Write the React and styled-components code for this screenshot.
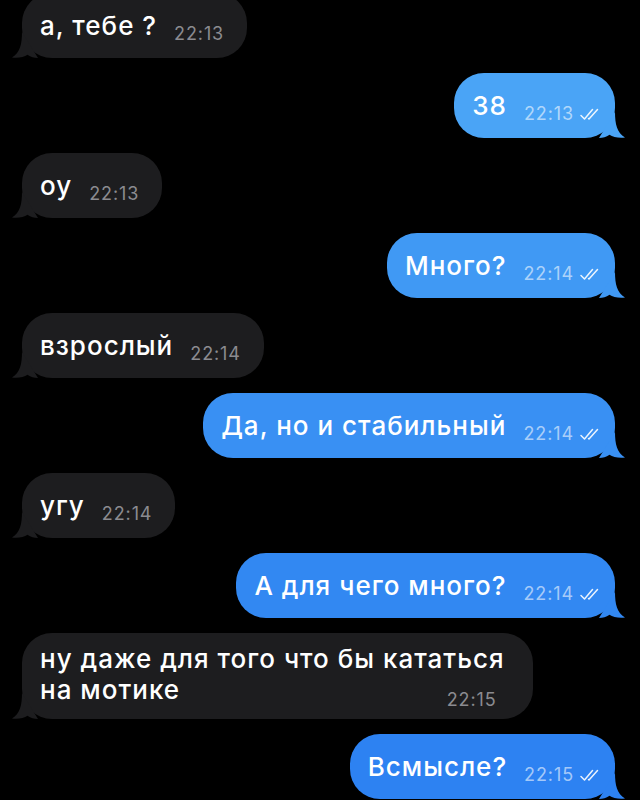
import React from "react";
import styled, { createGlobalStyle } from "styled-components";

const Global = createGlobalStyle`
  html, body {
    margin: 0;
    padding: 0;
    background: #000000;
  }
  body {
    font-family: Inter, "Noto Sans", Roboto, sans-serif;
    -webkit-font-smoothing: antialiased;
  }
`;

const Screen = styled.div`
  width: 640px;
  height: 800px;
  overflow: hidden;
  background: #000000;
`;

const Feed = styled.div`
  display: flex;
  flex-direction: column;
  gap: 15px;
  margin-top: -7px;
  padding: 0 25px 0 22px;
`;

const Row = styled.div`
  display: flex;
  justify-content: ${(p) => (p.$out ? "flex-end" : "flex-start")};
`;

const Bubble = styled.div`
  position: relative;
  display: flex;
  flex-direction: ${(p) => (p.$multi ? "column" : "row")};
  align-items: ${(p) => (p.$multi ? "stretch" : "flex-end")};
  box-sizing: border-box;
  min-height: 65px;
  padding: ${(p) => (p.$multi ? "10px 28px 9px 18px" : "0 15px 14px 18px")};
  border-radius: 30px;
  background: ${(p) => p.$bg};
  color: #ffffff;
`;

const Text = styled.span`
  font-size: 26px;
  line-height: ${(p) => (p.$multi ? "31px" : "30px")};
  font-weight: 500;
  letter-spacing: 1px;
  margin-bottom: ${(p) => (p.$multi ? "0" : "3px")};
  padding-bottom: ${(p) => (p.$last ? "5px" : "0")};
`;

const LastLine = styled.div`
  display: flex;
  justify-content: space-between;
  align-items: flex-end;
`;

const Meta = styled.span`
  display: flex;
  align-items: center;
  gap: 6px;
  margin-left: 17px;
  margin-right: ${(p) => (p.$out ? "0" : "8px")};
  font-size: 18px;
  line-height: 20px;
  letter-spacing: 0.9px;
  color: ${(p) => (p.$out ? "rgba(255, 255, 255, 0.58)" : "#8b8b90")};
`;

const Tail = styled.svg`
  position: absolute;
  bottom: 0;
  ${(p) => (p.$out ? "right: -10px;" : "left: -10px; transform: scaleX(-1);")}
  width: 26px;
  height: 26px;
`;

const Checks = () => (
  <svg width="20" height="13" viewBox="0 0 20 13" fill="none">
    <path
      d="M1 7.5 L4.5 11 L12.5 1.5"
      stroke="rgba(255,255,255,0.9)"
      strokeWidth="1.5"
      strokeLinecap="round"
      strokeLinejoin="round"
    />
    <path
      d="M8.5 10.5 L9 11 L17.5 1.5"
      stroke="rgba(255,255,255,0.9)"
      strokeWidth="1.5"
      strokeLinecap="round"
      strokeLinejoin="round"
    />
  </svg>
);

const messages = [
  { id: 1, lines: ["а, тебе ?"], time: "22:13" },
  { id: 2, lines: ["38"], time: "22:13", out: true, bg: "#4aa4f6" },
  { id: 3, lines: ["оу"], time: "22:13" },
  { id: 4, lines: ["Много?"], time: "22:14", out: true, bg: "#4099f4" },
  { id: 5, lines: ["взрослый"], time: "22:14" },
  { id: 6, lines: ["Да, но и стабильный"], time: "22:14", out: true, bg: "#3990f3" },
  { id: 7, lines: ["угу"], time: "22:14" },
  { id: 8, lines: ["А для чего много?"], time: "22:14", out: true, bg: "#3288f2" },
  { id: 9, lines: ["ну даже для того что бы кататься", "на мотике"], time: "22:15" },
  { id: 10, lines: ["Всмысле?"], time: "22:15", out: true, bg: "#2d82f2" },
];

const Message = ({ m }) => {
  const bg = m.out ? m.bg : "#1d1d1f";
  const multi = m.lines.length > 1;
  const meta = (
    <Meta $out={m.out}>
      {m.time}
      {m.out && <Checks />}
    </Meta>
  );
  return (
    <Row $out={m.out}>
      <Bubble $out={m.out} $multi={multi} $bg={bg}>
        {multi ? (
          <>
            {m.lines.slice(0, -1).map((l) => (
              <Text key={l} $multi>
                {l}
              </Text>
            ))}
            <LastLine>
              <Text $multi $last>
                {m.lines[m.lines.length - 1]}
              </Text>
              {meta}
            </LastLine>
          </>
        ) : (
          <>
            <Text>{m.lines[0]}</Text>
            {meta}
          </>
        )}
        <Tail $out={m.out} viewBox="0 0 26 26">
          <path
            d="M16 0 C16 12 18 21 26 25.5 C20 26.5 14 25 10.5 22.8 C7 25 4 26 0 26 Z"
            fill={bg}
          />
        </Tail>
      </Bubble>
    </Row>
  );
};

export default function App() {
  return (
    <>
      <Global />
      <Screen>
        <Feed>
          {messages.map((m) => (
            <Message key={m.id} m={m} />
          ))}
        </Feed>
      </Screen>
    </>
  );
}
